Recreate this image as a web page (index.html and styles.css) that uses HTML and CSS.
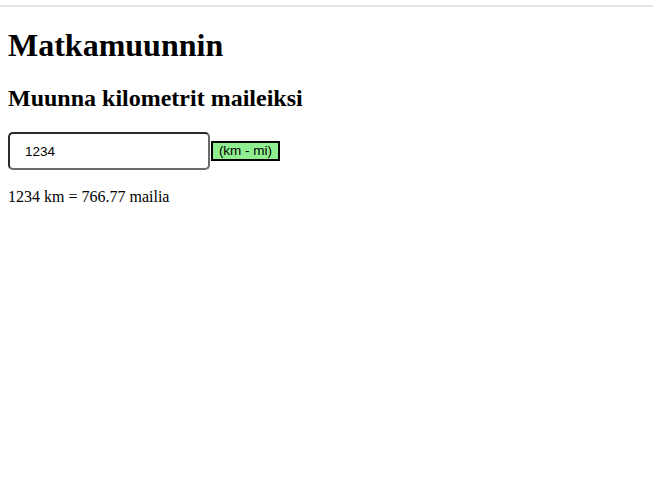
FILE: index.html
```
<!DOCTYPE html>
<html lang="fi">
<head>
<meta charset="utf-8">
<title>Matkamuunnin</title>
<link rel="stylesheet" href="styles.css">
</head>
<body>
<div class="topline"></div>
<main class="page">
  <h1 class="title">Matkamuunnin</h1>
  <h2 class="subtitle">Muunna kilometrit maileiksi</h2>
  <div class="form">
    <input class="km-input" type="text" value="1234">
    <button class="convert-btn" type="button">(km - mi)</button>
  </div>
  <p class="result">1234 km = 766.77 mailia</p>
</main>
</body>
</html>
```
FILE: styles.css
```
html, body {
  margin: 0;
  padding: 0;
  background: #fff;
}
body {
  font-family: "Liberation Serif", "Times New Roman", serif;
  color: #000;
}
.topline {
  height: 5px;
  border-bottom: 2px solid #e6e6e6;
}
.page {
  padding: 0 8px;
}
.title {
  font-size: 32px;
  font-weight: bold;
  margin: 20px 0 0;
  line-height: 37px;
}
.subtitle {
  font-size: 24px;
  font-weight: bold;
  margin: 20px 0 0;
  line-height: 28px;
}
.form {
  display: flex;
  align-items: center;
  margin-top: 20px;
}
.km-input {
  box-sizing: border-box;
  width: 202px;
  height: 38px;
  padding: 0 15px;
  margin: 0;
  font-family: "Liberation Sans", Arial, sans-serif;
  font-size: 13.5px;
  color: #000;
  border: 2px solid;
  border-color: #2a2a2a #6a6a6a #6a6a6a #2a2a2a;
  border-radius: 5px;
  background: #fff;
  outline: none;
}
.convert-btn {
  box-sizing: border-box;
  height: 20px;
  width: 69px;
  padding: 0;
  margin: 0 0 0 1px;
  font-family: "Liberation Sans", Arial, sans-serif;
  font-size: 13.5px;
  color: #000;
  background: #90ee90;
  border: 2px solid #000;
  border-radius: 0;
  line-height: 16px;
}
.result {
  font-size: 16px;
  margin: 18px 0 0;
  line-height: 18px;
}
```
